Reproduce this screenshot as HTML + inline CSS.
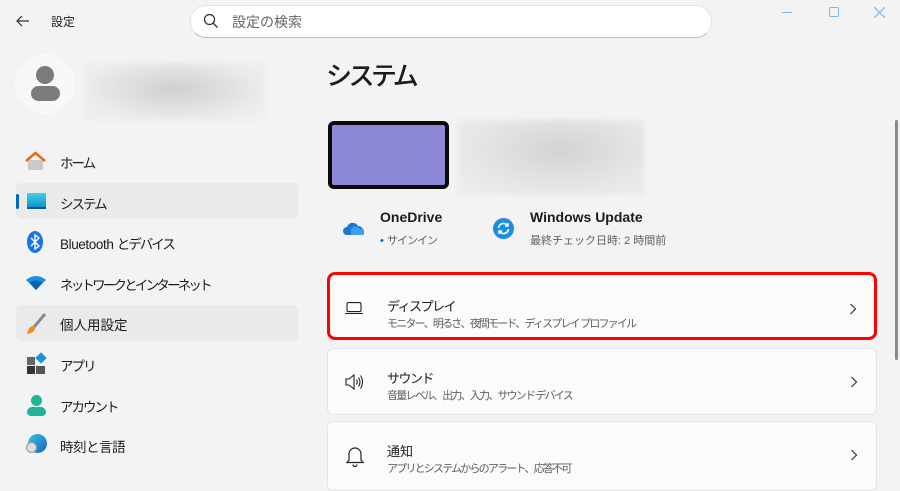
<!DOCTYPE html>
<html><head><meta charset="utf-8"><style>
*{margin:0;padding:0;box-sizing:border-box}
body{width:900px;height:480px;overflow:hidden;background:#f3f3f3;font-family:"Liberation Sans","Noto Sans CJK JP",sans-serif;color:#1b1b1b;position:relative}
.a{position:absolute}
.nav{position:absolute;left:60px;font-size:13.5px;color:#1b1b1b;letter-spacing:-2px}
.hl{position:absolute;left:16px;width:282px;height:36px;background:#eaeaea;border-radius:5px}
.card{position:absolute;left:327px;width:550px;background:#fbfbfb;border:1px solid #e5e5e5;border-radius:6px}
.t{position:absolute;left:59px;font-size:13px;color:#1b1b1b;letter-spacing:-1.5px}
.s{position:absolute;left:59px;font-size:11px;color:#5f5f5f;letter-spacing:-1.8px}
.ch{position:absolute;right:18px}
</style></head><body>
<svg class="a" style="left:15px;top:13px" width="16" height="16" viewBox="0 0 16 16"><path d="M14 8H2M7 3L2 8l5 5" stroke="#333" stroke-width="1.2" fill="none"/></svg>
<div class="a" style="left:51px;top:13px;font-size:12px">設定</div>
<div class="a" style="left:190px;top:5px;width:522px;height:33px;background:#fff;border-radius:16px;border:1px solid #e3e3e3;border-bottom-color:#bbb"></div>
<svg class="a" style="left:203px;top:13px" width="16" height="16" viewBox="0 0 16 16"><circle cx="6.5" cy="6.5" r="5" stroke="#333" stroke-width="1.3" fill="none"/><path d="M10 10l4.5 4.5" stroke="#333" stroke-width="1.3"/></svg>
<div class="a" style="left:232px;top:12px;font-size:14px;color:#666">設定の検索</div>
<div class="a" style="left:782px;top:12px;width:10px;height:1px;background:#7fb8ec"></div>
<div class="a" style="left:829px;top:7px;width:10px;height:10px;border:1.3px solid #7fb8ec;border-radius:2px"></div>
<svg class="a" style="left:874px;top:7px" width="11" height="11" viewBox="0 0 11 11"><path d="M0 0L11 11M11 0L0 11" stroke="#7fb8ec" stroke-width="1.2"/></svg>
<div class="a" style="left:15px;top:54px;width:60px;height:60px;border-radius:50%;background:#f8f8f8"></div>
<div class="a" style="left:36px;top:66px;width:18px;height:18px;border-radius:50%;background:#7b7b7b"></div>
<div class="a" style="left:31px;top:86px;width:29px;height:15px;border-radius:9px;background:#7b7b7b"></div>
<div class="a" style="left:85px;top:63px;width:180px;height:58px;background:radial-gradient(ellipse at 50% 45%,#cfcfcf,#ececec 70%,#f0f0f0);filter:blur(2px)"></div>
<div class="hl" style="top:183px"></div>
<div class="hl" style="top:305px"></div>
<div class="a" style="left:16px;top:194px;width:3px;height:15px;background:#0067c0;border-radius:2px"></div>
<svg class="a" style="left:25px;top:151px" width="21" height="20" viewBox="0 0 21 20"><path d="M3 9v10h15V9" fill="#c9c9c9"/><path d="M1 10L10.5 2 20 10" stroke="#e8681a" stroke-width="2.5" fill="none"/></svg>
<div class="a" style="left:27px;top:193px;width:19px;height:16px;background:linear-gradient(#3fd0e8,#1592c9);border-bottom:2px solid #0b5c8c"></div>
<svg class="a" style="left:27px;top:231px" width="16" height="22" viewBox="0 0 16 22"><ellipse cx="8" cy="11" rx="8" ry="11" fill="#1a73e8"/><path d="M4 7l8 8-4 3V4l4 3-8 8" stroke="#fff" stroke-width="1.4" fill="none"/></svg>
<svg class="a" style="left:26px;top:275px" width="20" height="15" viewBox="0 0 20 15"><path d="M0 5Q10-3 20 5L10 15z" fill="#1a8fe0"/><path d="M4 8Q10 3 16 8L10 15z" fill="#0d5fb0"/></svg>
<svg class="a" style="left:26px;top:313px" width="20" height="22" viewBox="0 0 20 22"><path d="M19 1L8 14" stroke="#888" stroke-width="3"/><path d="M7 13c-4 0-5 5-6 8 4-1 8-2 8-6z" fill="#f08a1c"/></svg>
<div class="a" style="left:27px;top:357px;width:8px;height:8px;background:#666"></div><div class="a" style="left:27px;top:366px;width:8px;height:8px;background:#333"></div><div class="a" style="left:36px;top:366px;width:9px;height:8px;background:#555"></div>
<div class="a" style="left:37px;top:354px;width:8px;height:8px;background:#1a8fe0;transform:rotate(45deg)"></div>
<div class="a" style="left:31px;top:395px;width:11px;height:11px;border-radius:50%;background:#1fb59b"></div>
<div class="a" style="left:27px;top:407px;width:19px;height:9px;border-radius:5px 5px 4px 4px;background:#1fb59b"></div>
<div class="a" style="left:28px;top:434px;width:19px;height:19px;border-radius:50%;background:linear-gradient(135deg,#38c3e8,#1565c0)"></div>
<div class="a" style="left:26px;top:442px;width:11px;height:11px;border-radius:50%;background:#ddd;border:1px solid #999"></div>
<div class="nav" style="top:152px">ホーム</div>
<div class="nav" style="top:193px">システム</div>
<div class="nav" style="top:233px;letter-spacing:-0.4px">Bluetooth <span style="letter-spacing:-2px">とデバイス</span></div>
<div class="nav" style="top:274px;letter-spacing:-2.8px">ネットワークとインターネット</div>
<div class="nav" style="top:314px;letter-spacing:0">個人用設定</div>
<div class="nav" style="top:355px">アプリ</div>
<div class="nav" style="top:396px">アカウント</div>
<div class="nav" style="top:436px;letter-spacing:-0.5px">時刻と言語</div>
<div class="a" style="left:326px;top:56px;font-size:26px;font-weight:500;letter-spacing:-3.5px">システム</div>
<div class="a" style="left:328px;top:121px;width:121px;height:68px;background:#8d88d8;border:4px solid #0a0a0a;border-radius:6px"></div>
<div class="a" style="left:458px;top:120px;width:186px;height:75px;background:radial-gradient(ellipse at 55% 40%,#d3d3d3,#e6e6e8 60%,#eeeeee);filter:blur(2px)"></div>
<svg class="a" style="left:343px;top:221px" width="21" height="14" viewBox="0 0 21 14"><path d="M4 14a4 4 0 010-8 6 6 0 0111-1 4.5 4.5 0 011 9z" fill="#1a78d4"/><path d="M8 14h12a3 3 0 00-3-6 5 5 0 00-9 1z" fill="#3aa0ec"/></svg>
<div class="a" style="left:380px;top:209px;font-size:14px;font-weight:bold">OneDrive</div>
<div class="a" style="left:380px;top:232px;font-size:11px;color:#5f5f5f;letter-spacing:-1px"><span style="color:#0067c0">•</span>&nbsp; サインイン</div>
<svg class="a" style="left:493px;top:218px" width="21" height="21" viewBox="0 0 21 21"><circle cx="10.5" cy="10.5" r="10.5" fill="#1a8fe0"/><path d="M5.5 10a5 5 0 019-2.5M15.5 11a5 5 0 01-9 2.5" stroke="#fff" stroke-width="1.6" fill="none"/><path d="M15 5v3h-3M6 16v-3h3" stroke="#fff" stroke-width="1.4" fill="none"/></svg>
<div class="a" style="left:530px;top:209px;font-size:14px;font-weight:bold">Windows Update</div>
<div class="a" style="left:530px;top:232px;font-size:11px;color:#5f5f5f">最終チェック日時: 2 時間前</div>
<div class="card" style="top:272px;height:68px;border:3px solid #f00;border-radius:8px">
<svg class="a" style="left:15px;top:27px" width="18" height="12" viewBox="0 0 18 12"><rect x="2" y="0.6" width="14" height="9" rx="1.5" stroke="#222" fill="none" stroke-width="1.1"/><path d="M0 11.5h18" stroke="#222" stroke-width="1.1"/></svg>
<div class="t" style="top:21px;left:57px">ディスプレイ</div><div class="s" style="top:40px;left:57px">モニター、明るさ、夜間モード、ディスプレイ プロファイル</div>
<svg class="ch" style="top:28px;right:17px" width="8" height="12" viewBox="0 0 8 12"><path d="M1.5 1l5 5-5 5" stroke="#333" stroke-width="1.2" fill="none"/></svg></div>
<div class="card" style="top:348px;height:67px">
<svg class="a" style="left:17px;top:25px" width="18" height="16" viewBox="0 0 18 16"><path d="M1 5h3l5-4v14l-5-4H1z" stroke="#222" fill="none" stroke-width="1.1"/><path d="M11.5 5.5q1.5 2.5 0 5M13.5 3.5q3 4.5 0 9M15.5 1.5q4 6.5 0 13" stroke="#222" fill="none" stroke-width="1.1"/></svg>
<div class="t" style="top:19px">サウンド</div><div class="s" style="top:38px">音量レベル、出力、入力、サウンド デバイス</div>
<svg class="ch" style="top:27px;right:18px" width="8" height="12" viewBox="0 0 8 12"><path d="M1.5 1l5 5-5 5" stroke="#333" stroke-width="1.2" fill="none"/></svg></div>
<div class="card" style="top:421px;height:70px">
<svg class="a" style="left:18px;top:24px" width="18" height="21" viewBox="0 0 18 21"><path d="M3 14V8a6 6 0 0112 0v6l2 2.5H1z" stroke="#222" fill="none" stroke-width="1.2"/><path d="M7 18.5a2 2 0 004 0" stroke="#222" fill="none" stroke-width="1.2"/></svg>
<div class="t" style="top:19px;letter-spacing:0">通知</div><div class="s" style="top:38px">アプリとシステムからのアラート、応答不可</div>
<svg class="ch" style="top:27px;right:18px" width="8" height="12" viewBox="0 0 8 12"><path d="M1.5 1l5 5-5 5" stroke="#333" stroke-width="1.2" fill="none"/></svg></div>
<div class="a" style="left:895px;top:120px;width:3px;height:240px;background:#8a8a8a;border-radius:2px"></div>
</body></html>
